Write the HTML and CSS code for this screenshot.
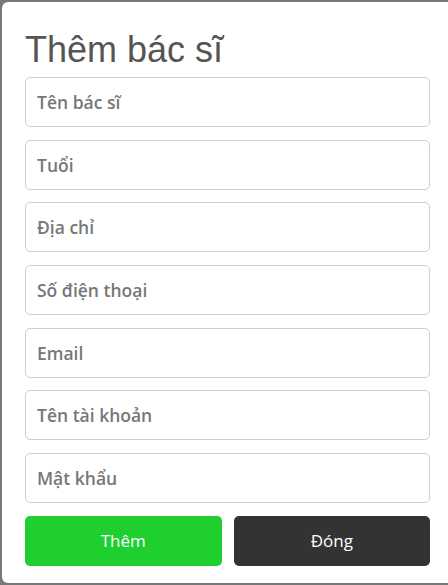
FILE: index.html
```html
<!DOCTYPE html>
<html lang="vi">
<head>
<meta charset="utf-8">
<link rel="stylesheet" href="styles.css">
</head>
<body>
<div class="modal">
  <h1 class="title">Thêm bác sĩ</h1>
  <form class="form">
    <input class="field" type="text" placeholder="Tên bác sĩ">
    <input class="field" type="text" placeholder="Tuổi">
    <input class="field" type="text" placeholder="Địa chỉ">
    <input class="field" type="text" placeholder="Số điện thoại">
    <input class="field" type="text" placeholder="Email">
    <input class="field" type="text" placeholder="Tên tài khoản">
    <input class="field" type="password" placeholder="Mật khẩu">
    <div class="actions">
      <button type="button" class="btn btn-add">Thêm</button>
      <button type="button" class="btn btn-close">Đóng</button>
    </div>
  </form>
</div>
</body>
</html>
```
FILE: styles.css
```css
html, body {
  margin: 0;
  padding: 0;
  height: 100%;
}
body {
  background: #787878;
  overflow: hidden;
}
.modal {
  margin: 2px 0 0 2px;
  height: 581px;
  background: #fff;
  border-radius: 6px 0 0 6px;
  padding: 28px 18px 0 23px;
  box-sizing: border-box;
}
.title {
  margin: 0;
  font-family: "Liberation Sans", Arial, sans-serif;
  font-weight: 400;
  font-size: 36px;
  line-height: 40px;
  color: #555;
}
.form {
  margin-top: 7px;
  display: flex;
  flex-direction: column;
  gap: 12.67px;
}
.field {
  box-sizing: border-box;
  height: 50px;
  width: 100%;
  margin: 0;
  border: 1px solid #cfcfcf;
  border-radius: 5px;
  padding: 0 11px;
  font-family: "Open Sans", sans-serif;
  font-size: 17.5px;
  font-weight: 600;
  color: #555;
  background: #fff;
  outline: none;
}
.field::placeholder {
  color: #777;
  opacity: 1;
}
.actions {
  display: flex;
  gap: 12px;
}
.btn {
  flex: 1;
  height: 50px;
  border: none;
  border-radius: 5px;
  font-family: "Open Sans", sans-serif;
  font-size: 17px;
  color: #fff;
  cursor: pointer;
}
.btn-add {
  background: #1ecf2f;
}
.btn-close {
  background: #333;
}
```
